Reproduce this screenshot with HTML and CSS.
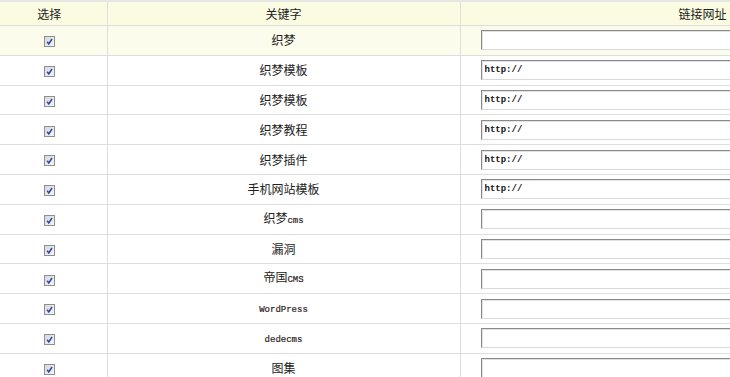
FILE: index.html
```html
<!DOCTYPE html>
<html lang="zh-CN">
<head>
    <meta charset="UTF-8">
    <title>关键字链接</title>
    <link rel="stylesheet" href="styles.css">
</head>
<body>
    <table class="keywords">
        <colgroup>
            <col class="col-check">
            <col class="col-word">
            <col class="col-url">
        </colgroup>
        <thead>
            <tr>
                <th>选择</th>
                <th>关键字</th>
                <th>链接网址</th>
            </tr>
        </thead>
        <tbody>
            <tr class="hover">
                <td><span class="check"><svg viewBox="0 0 10 10"><path d="M2.4 5.2 L4.2 7.6 L7.8 2.2"/></svg></span></td>
                <td>织梦</td>
                <td><input class="url" type="text" value=""></td>
            </tr>
            <tr>
                <td><span class="check"><svg viewBox="0 0 10 10"><path d="M2.4 5.2 L4.2 7.6 L7.8 2.2"/></svg></span></td>
                <td>织梦模板</td>
                <td><input class="url" type="text" value="http://"></td>
            </tr>
            <tr>
                <td><span class="check"><svg viewBox="0 0 10 10"><path d="M2.4 5.2 L4.2 7.6 L7.8 2.2"/></svg></span></td>
                <td>织梦模板</td>
                <td><input class="url" type="text" value="http://"></td>
            </tr>
            <tr>
                <td><span class="check"><svg viewBox="0 0 10 10"><path d="M2.4 5.2 L4.2 7.6 L7.8 2.2"/></svg></span></td>
                <td>织梦教程</td>
                <td><input class="url" type="text" value="http://"></td>
            </tr>
            <tr>
                <td><span class="check"><svg viewBox="0 0 10 10"><path d="M2.4 5.2 L4.2 7.6 L7.8 2.2"/></svg></span></td>
                <td>织梦插件</td>
                <td><input class="url" type="text" value="http://"></td>
            </tr>
            <tr>
                <td><span class="check"><svg viewBox="0 0 10 10"><path d="M2.4 5.2 L4.2 7.6 L7.8 2.2"/></svg></span></td>
                <td>手机网站模板</td>
                <td><input class="url" type="text" value="http://"></td>
            </tr>
            <tr>
                <td><span class="check"><svg viewBox="0 0 10 10"><path d="M2.4 5.2 L4.2 7.6 L7.8 2.2"/></svg></span></td>
                <td>织梦<span class="mono">cms</span></td>
                <td><input class="url" type="text" value=""></td>
            </tr>
            <tr>
                <td><span class="check"><svg viewBox="0 0 10 10"><path d="M2.4 5.2 L4.2 7.6 L7.8 2.2"/></svg></span></td>
                <td>漏洞</td>
                <td><input class="url" type="text" value=""></td>
            </tr>
            <tr>
                <td><span class="check"><svg viewBox="0 0 10 10"><path d="M2.4 5.2 L4.2 7.6 L7.8 2.2"/></svg></span></td>
                <td>帝国<span class="mono">CMS</span></td>
                <td><input class="url" type="text" value=""></td>
            </tr>
            <tr>
                <td><span class="check"><svg viewBox="0 0 10 10"><path d="M2.4 5.2 L4.2 7.6 L7.8 2.2"/></svg></span></td>
                <td><span class="mono">WordPress</span></td>
                <td><input class="url" type="text" value=""></td>
            </tr>
            <tr>
                <td><span class="check"><svg viewBox="0 0 10 10"><path d="M2.4 5.2 L4.2 7.6 L7.8 2.2"/></svg></span></td>
                <td><span class="mono">dedecms</span></td>
                <td><input class="url" type="text" value=""></td>
            </tr>
            <tr>
                <td><span class="check"><svg viewBox="0 0 10 10"><path d="M2.4 5.2 L4.2 7.6 L7.8 2.2"/></svg></span></td>
                <td>图集</td>
                <td><input class="url" type="text" value=""></td>
            </tr>
        </tbody>
    </table>
</body>
</html>
```

FILE: styles.css
```css
html, body {
    margin: 0;
    padding: 0;
    overflow: hidden;
    background: #fff;
}
body {
    font-family: "Noto Sans CJK SC", "DejaVu Sans", sans-serif;
    font-size: 12px;
    color: #222;
}
.keywords {
    border-collapse: collapse;
    table-layout: fixed;
    width: 953px;
    margin-left: -8px;
    border-top: 2px solid #e6e6e6;
}
.col-check {
    width: 115px;
}
.col-word {
    width: 353px;
}
.col-url {
    width: 485px;
}
.keywords th,
.keywords td {
    padding: 0;
    text-align: center;
    vertical-align: middle;
    border-bottom: 1px solid #dedede;
    border-right: 1px solid #dedede;
    line-height: 14px;
}
.keywords th {
    height: 23px;
    font-weight: normal;
    background: #fbfbe1;
}
.keywords td {
    height: 28.8px;
}
.keywords tr.hover td {
    background: #fcfcec;
}
.keywords td:last-child {
    text-align: left;
    padding-left: 20px;
}
.check {
    display: inline-block;
    width: 9px;
    height: 9px;
    border: 1px solid #8e8f8f;
    background: linear-gradient(135deg, #d8d8d8, #f6f6f6);
    vertical-align: middle;
    margin-top: -1px;
}
.check svg {
    display: block;
    width: 9px;
    height: 9px;
    fill: none;
    stroke: #2b48a8;
    stroke-width: 1.7;
}
.mono {
    font-family: "Liberation Mono", monospace;
    font-size: 9px;
    color: #2b211b;
    -webkit-text-stroke: 0.2px #2b211b;
}
.url {
    box-sizing: border-box;
    width: 450px;
    height: 20px;
    margin: 0;
    padding: 0 3px;
    border: 1px solid #d9d9d9;
    border-top-color: #8a8a8a;
    border-left-color: #8a8a8a;
    box-shadow: inset 1px 1px 0 #e2e2e2;
    background: #fff;
    font-family: "Liberation Mono", monospace;
    font-size: 9px;
    font-weight: bold;
    color: #111;
    vertical-align: middle;
    outline: none;
}
```
